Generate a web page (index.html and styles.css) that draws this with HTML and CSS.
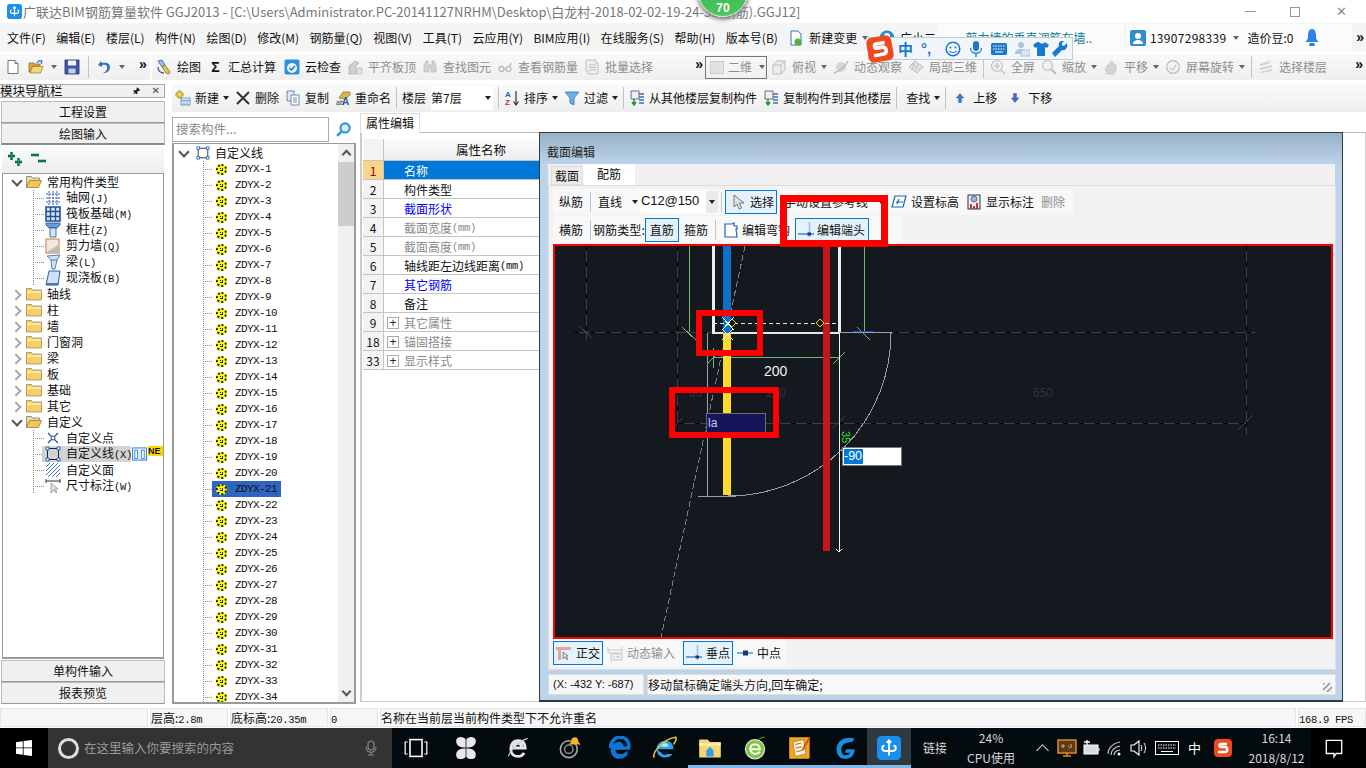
FILE: index.html
```html
<!DOCTYPE html>
<html lang="zh-CN">
<head>
<meta charset="utf-8">
<title>广联达BIM钢筋算量软件 GGJ2013</title>
<link rel="stylesheet" href="styles.css">
</head>
<body>
<svg class="sprite" xmlns="http://www.w3.org/2000/svg">
<symbol id="app" viewBox="0 0 16 16"><rect width="16" height="16" rx="3" fill="#1a90ee"/><path d="M8 3.500v9.500M5 6.500c-2 0-2 3 0 3.500h6c2-.5 2-3.500 0-3.500M6.500 4.500 8 3l1.500 1.500" fill="none" stroke="#fff" stroke-width="1.300"/></symbol>
<symbol id="doc" viewBox="0 0 16 16"><path d="M3 1.500h7l3 3v10H3z" fill="#fff" stroke="#777"/><path d="M10 1.500v3h3" fill="#dde" stroke="#777"/></symbol>
<symbol id="open" viewBox="0 0 16 16"><path d="M1 4h5l1 1h5v2H5L3 13H1z" fill="#d9a63a" stroke="#8a6a1e" stroke-width=".7"/><path d="M4.500 7.500H15L12.500 14H2z" fill="#f6d67c" stroke="#9a7420" stroke-width=".7"/><path d="M9 4c1-2 3-3 5-2l-1 3" fill="none" stroke="#2a6fc4" stroke-width="1.200"/></symbol>
<symbol id="save" viewBox="0 0 16 16"><path d="M1 1h14v14H1z" fill="#3e57a8" stroke="#1d2d70" stroke-width=".8"/><path d="M4 1.500h8v5H4z" fill="#f3f3f3"/><path d="M4.500 9.500h7v5h-7z" fill="#c6cede"/></symbol>
<symbol id="undo" viewBox="0 0 16 16"><path d="M5 2 2 6l4 2V6c4-1 6 1 5 4-.5 2-2 3-4 4 4 0 7-2 7-6 0-4-4-5-8-4z" fill="#2b72c8"/></symbol>
<symbol id="draw" viewBox="0 0 16 16"><path d="M2 2l4-1 3 5-3 2z" fill="#9ac0ea" stroke="#2a5ea8" stroke-width=".8"/><path d="M6 8l3-2 5 7-1 2-3-1z" fill="#e8c15a" stroke="#8a6a1e" stroke-width=".8"/><path d="M2 8c0 4 3 6 6 6" fill="none" stroke="#2a5ea8" stroke-width="1.400"/></symbol>
<symbol id="cloud" viewBox="0 0 16 16"><rect x=".5" y=".5" width="15" height="15" rx="2" fill="#2d8fdf"/><circle cx="8" cy="9" r="5" fill="#eaf4fd"/><path d="M5.500 9l2 2 3.500-4" fill="none" stroke="#2371bd" stroke-width="1.500"/></symbol>
<symbol id="gplate" viewBox="0 0 16 16"><path d="M2 15V7l6-5 4 2-3 3v8z" fill="#cfcfcf" stroke="#aaa" stroke-width=".7"/><path d="M10 9h5v6h-5z" fill="#e3e3e3" stroke="#b5b5b5" stroke-width=".7"/></symbol>
<symbol id="binoc" viewBox="0 0 16 16"><path d="M2 7l2-5h2v4h4V2h2l2 5v6H9V8H7v5H2z" fill="#d3d3d3" stroke="#b0b0b0" stroke-width=".6"/></symbol>
<symbol id="glass" viewBox="0 0 16 16"><circle cx="4.500" cy="10" r="2.500" fill="none" stroke="#bbb" stroke-width="1.300"/><path d="M9 10a2.500 2.500 0 1 0 5 0 2.500 2.500 0 1 0-5 0M7 10h2M13 8l1-4" fill="none" stroke="#bbb" stroke-width="1.300"/></symbol>
<symbol id="batch" viewBox="0 0 16 16"><path d="M2 1h10v3h2v11H4v-3H2z" fill="#eee" stroke="#c0c0c0"/><path d="M5 6h7M5 8.500h7M5 11h7" stroke="#c0c0c0"/></symbol>
<symbol id="cube" viewBox="0 0 16 16"><path d="M2 6l4-4h8v9l-4 4H2z" fill="#eee" stroke="#bdbdbd"/><path d="M2 6h8v9M10 6l4-4" fill="none" stroke="#bdbdbd"/></symbol>
<symbol id="orbit" viewBox="0 0 16 16"><circle cx="8" cy="8" r="5" fill="#d6d6d6"/><path d="M1 14C5 13 13 7 15 2" fill="none" stroke="#bbb" stroke-width="1.500"/></symbol>
<symbol id="local" viewBox="0 0 16 16"><path d="M1 8l6-6 8 6-6 6z" fill="#e5e5e5" stroke="#bbb"/><path d="M4 5l8 6M7 2.500l-3 9M10 5l-3 8" stroke="#c5c5c5"/></symbol>
<symbol id="zfull" viewBox="0 0 16 16"><circle cx="7" cy="7" r="5.500" fill="#f0f0f0" stroke="#c0c0c0" stroke-width="1.200"/><path d="M4 7h6M7 4v6M11 11l4 4" stroke="#bbb" stroke-width="1.200"/></symbol>
<symbol id="zoom" viewBox="0 0 16 16"><circle cx="6.500" cy="6.500" r="5" fill="#f2f2f2" stroke="#ccc" stroke-width="1.400"/><path d="M10 10l5 5" stroke="#bbb" stroke-width="2"/></symbol>
<symbol id="pan" viewBox="0 0 16 16"><path d="M4 15l-2-5 2-1V6l2 1V4l2 1V2l2 1 1 2 2 1v5l-2 4z" fill="#d5d5d5" stroke="#bdbdbd" stroke-width=".6"/></symbol>
<symbol id="rot" viewBox="0 0 16 16"><circle cx="8" cy="8" r="6.300" fill="#f3f3f3" stroke="#bbb" stroke-width="1.200"/><path d="M5 9l3 2 3-5" fill="none" stroke="#c5c5c5" stroke-width="1.200"/></symbol>
<symbol id="layers" viewBox="0 0 16 16"><path d="M2 5l10-3v2L2 7zM2 9l12-3v2L2 11zM2 13l12-3v2l-12 2z" fill="#d2d2d2"/></symbol>
<symbol id="newc" viewBox="0 0 16 16"><path d="M1 3h2V1h3v2h2v3H6v2H3V6H1z" fill="#f0d64a" stroke="#9a8a1e" stroke-width=".8"/><rect x="6" y="8" width="9" height="7" fill="#dfe9f5" stroke="#5c86b8" stroke-width=".8"/><path d="M6 10.500h9M9 11v4M12 11v4" stroke="#5c86b8" stroke-width=".7"/></symbol>
<symbol id="del" viewBox="0 0 16 16"><path d="M2 2l12 12M14 2 2 14" stroke="#333" stroke-width="2"/></symbol>
<symbol id="copy" viewBox="0 0 16 16"><path d="M2 1h7v10H2z" fill="#e3ecf8" stroke="#4c6da3" stroke-width=".8"/><path d="M6 5h8v10H6z" fill="#fff" stroke="#4c6da3" stroke-width=".8"/><path d="M8 8h4M8 10h4M8 12h4" stroke="#4c6da3" stroke-width=".8"/></symbol>
<symbol id="filter" viewBox="0 0 16 16"><path d="M1 2h14l-5 6v7l-4-2V8z" fill="#6db0e6" stroke="#2c74b4" stroke-width=".8"/></symbol>
<symbol id="cpf" viewBox="0 0 16 16"><path d="M2 1h8v8H2z" fill="#eef" stroke="#333" stroke-width=".7"/><path d="M5 9v6M3 12l2 3 2-3" stroke="#1b9a2a" stroke-width="1.500" fill="none"/><path d="M10 4h5M10 7h5M10 10h5M10 13h5" stroke="#3a6fb0" stroke-width="1.400"/></symbol>
<symbol id="up" viewBox="0 0 16 16"><path d="M8 2l5 6h-3v6H6V8H3z" fill="#2d7fd3" stroke="#1a4f90" stroke-width=".5"/></symbol>
<symbol id="down" viewBox="0 0 16 16"><path d="M8 14l5-6h-3V2H6v6H3z" fill="#4a66c0" stroke="#2a3f90" stroke-width=".5"/></symbol>
<symbol id="search" viewBox="0 0 16 16"><circle cx="9.500" cy="6.500" r="4.300" fill="#dbeeff" stroke="#2f97d8" stroke-width="2"/><path d="M6.500 9.500 2 14" stroke="#2f97d8" stroke-width="2.500"/></symbol>
<symbol id="folder" viewBox="0 0 16 14"><path d="M.5 3V1.500h5l1 1.500h9v10H.500z" fill="#f4cf6a" stroke="#a78b46" stroke-width=".8"/><path d="M1 4h14v2H1z" fill="#fbeab0"/></symbol>
<symbol id="fopen" viewBox="0 0 16 14"><path d="M.5 12V1.500h5l1 1.500h7v2" fill="#e9d9ae" stroke="#8d7a4c" stroke-width=".8"/><path d="M.5 12.500 3.500 5.500h12l-3 7z" fill="#f5c650" stroke="#8d7a4c" stroke-width=".8"/></symbol>
<symbol id="grid" viewBox="0 0 16 16"><path d="M1 4h14M1 8h14M1 12h14M4 1v14M8 1v14M12 1v14" stroke="#2d5ea8" stroke-width="1" stroke-dasharray="2 1"/></symbol>
<symbol id="raft" viewBox="0 0 16 16"><path d="M1 1h14v14H1z" fill="#d9e6f5" stroke="#1f4f9a" stroke-width="1.600"/><path d="M1 5.500h14M1 10.500h14M5.500 1v14M10.500 1v14" stroke="#1f4f9a" stroke-width="1.400"/></symbol>
<symbol id="colm" viewBox="0 0 16 16"><path d="M1 1h14v2l-3 3H4L1 3z" fill="#6e9bd4" stroke="#1f4f9a" stroke-width=".8"/><path d="M5 6h6v9H5z" fill="#d5e4f6" stroke="#1f4f9a" stroke-width=".8"/></symbol>
<symbol id="wall" viewBox="0 0 16 16"><rect x="1" y="1" width="13" height="14" fill="#f5e8da" stroke="#c97a45" stroke-width="1"/><path d="M2 14 13 7v7z" fill="#bbb"/></symbol>
<symbol id="beam" viewBox="0 0 16 16"><path d="M2 2l13-1-3 5-2 9H7L6 6z" fill="#cfe2f6" stroke="#2a66ac" stroke-width=".8"/><path d="M6 6l6 0" stroke="#2a66ac" stroke-width=".8"/></symbol>
<symbol id="slab" viewBox="0 0 16 16"><path d="M4 1h11l-2 14H1z" fill="#cfe0f5" stroke="#2a5ea8"/><path d="M2 14h11" stroke="#2a5ea8" stroke-width="1.500"/></symbol>
<symbol id="pt" viewBox="0 0 16 16"><path d="M3 3l10 10M13 3 3 13" stroke="#1f4f9a" stroke-width="1.100"/><circle cx="8" cy="8" r="2" fill="#fff" stroke="#1f4f9a"/></symbol>
<symbol id="ln" viewBox="0 0 16 16"><rect x="2.500" y="2.500" width="11" height="11" fill="none" stroke="#222"/><path d="M1 1h3v3H1zM12 1h3v3h-3zM1 12h3v3H1zM12 12h3v3h-3z" fill="#fff" stroke="#1e62c8"/></symbol>
<symbol id="ar" viewBox="0 0 16 16"><path d="M1 5l4-4M1 9l8-8M1 13 13 1M3 15 15 3M7 15l8-8M11 15l4-4" stroke="#3d78c8" stroke-width="1"/></symbol>
<symbol id="dim" viewBox="0 0 16 16"><path d="M1 1v4M15 1v4M1 3h14" stroke="#333"/><path d="M6 5v10l3-3 2 3 1-1-2-3h3z" fill="#ddd" stroke="#888" stroke-width=".7"/></symbol>
<symbol id="cols" viewBox="0 0 16 16"><rect x=".5" y="1.500" width="15" height="13" fill="#e5f1fb" stroke="#2d7fd3"/><path d="M3 4h3v9H3zM10 4h3v9h-3z" fill="#fff" stroke="#2d7fd3"/></symbol>
<symbol id="arrow" viewBox="0 0 16 16"><path d="M3 1v12l3-3 2 5 2.500-1-2-5H13z" fill="#e3e3e3" stroke="#777"/></symbol>
<symbol id="lvl" viewBox="0 0 16 16"><path d="M4 2h11l-3 11H1z" fill="#fff" stroke="#1f62b8" stroke-width="1.200"/><path d="M8 5 6 10M5 8h7" stroke="#1f62b8" stroke-width="1.200"/></symbol>
<symbol id="lbl" viewBox="0 0 16 16"><rect x="2" y="1" width="12" height="14" fill="#e8eef6" stroke="#333"/><circle cx="8" cy="5" r="3" fill="#9db6d6" stroke="#333" stroke-width=".6"/><path d="M4 15v-5h2v5zM7 15v-3h2v3zM10 15V9h2v6z" fill="#c33"/></symbol>
<symbol id="hook" viewBox="0 0 16 16"><path d="M2 15V2h7l2-1v3h3v3h-1l1 8z" fill="#fff" stroke="#1f62b8" stroke-width="1.200"/></symbol>
<symbol id="endp" viewBox="0 0 16 16"><path d="M11.500 0v15" stroke="#9dc0e8" stroke-width="1.600"/><path d="M0 12h16" stroke="#2a66b4" stroke-width="1.200"/><rect x="9.500" y="10.500" width="3.500" height="3" fill="#14387a"/></symbol>
<symbol id="mid" viewBox="0 0 16 16"><path d="M0 8h16" stroke="#6b95cf" stroke-width="1.600"/><rect x="6" y="5.500" width="5" height="5" fill="#14387a"/></symbol>
<symbol id="ortho" viewBox="0 0 16 16"><path d="M0 2h15v3H5v10H2V5H0z" fill="#e3a6a6"/><path d="M7 7v7l2-2 2 3 1-1-2-3h2z" fill="#ddd" stroke="#666" stroke-width=".7"/></symbol>
<symbol id="dyn" viewBox="0 0 16 16"><path d="M1 2v6h14V2M1 5h14" fill="none" stroke="#c5c5c5"/><rect x="4" y="9" width="11" height="6" fill="#f5f5f5" stroke="#c5c5c5"/><path d="M7 11v2M10 11v2M12 11v2" stroke="#b5b5b5"/></symbol>
<symbol id="win" viewBox="0 0 16 16"><path d="M0 2.200 6.800 1.200V7.500H0zM7.600 1.100 16 0V7.500H7.600zM0 8.300H6.800V14.800L0 13.800zM7.600 8.300H16V16L7.600 14.900z" fill="#fff"/></symbol>
<symbol id="mic" viewBox="0 0 16 16"><rect x="5" y="1" width="6" height="9" rx="3" fill="none" stroke="#888" stroke-width="1.200"/><path d="M3 7c0 7 10 7 10 0M8 12v3M5 15h6" fill="none" stroke="#888" stroke-width="1.200"/></symbol>
<symbol id="tview" viewBox="0 0 20 16"><rect x="5" y="1" width="10" height="14" fill="none" stroke="#fff" stroke-width="1.300"/><path d="M3 3H1v10h2M17 3h2v10h-2" fill="none" stroke="#fff" stroke-width="1"/></symbol>
<symbol id="wheel" viewBox="0 0 20 20"><path d="M10 10C4 10 1 7 2 3c1-3 6-3 8 0 2-3 7-3 8 0 1 4-2 7-8 7 6 0 9 3 8 7-1 3-6 3-8 0-2 3-7 3-8 0-1-4 2-7 8-7z" fill="#e8e8e8"/><path d="M10 0v20M0 10h20" stroke="#000" stroke-width=".6"/></symbol>
<symbol id="ie" viewBox="0 0 20 20"><path d="M4 10h12c0-4-2-6-6-6s-6 3-6 7 3 6 6 6c2 0 4-1 5-3M7 9c0-2 1-3 3-3s3 1 3 3" fill="none" stroke="#e6e6e6" stroke-width="2.400"/><path d="M2 17C3 13 9 5 18 2" fill="none" stroke="#cfcfcf" stroke-width="1"/></symbol>
<symbol id="swirl" viewBox="0 0 20 20"><circle cx="9" cy="11" r="7" fill="none" stroke="#aaa" stroke-width="1.300"/><circle cx="9" cy="11" r="3.500" fill="none" stroke="#888" stroke-width="1.300"/><path d="M14 1c3 0 3 3 3 4l2 2h-10l2-2c0-1 0-4 3-4z" fill="#f5b81f"/></symbol>
<symbol id="edge" viewBox="0 0 20 20"><path d="M3 11h11c0-4-1-6-4-6S4 7 3 11zM3 11c0 5 3 8 7 8 3 0 5-1 7-3v-4c-2 2-4 3-6 3-3 0-4-2-4-4" fill="#0a76d8"/><path d="M3 10C3 4 7 1 11 1c5 0 8 4 7 9H8c0-3 1-4 3-4" fill="none" stroke="#0a76d8" stroke-width="3"/></symbol>
<symbol id="ieb" viewBox="0 0 20 20"><path d="M3 11h14c0-5-3-7-7-7s-7 3-7 7 3 7 7 7c3 0 5-1 6-3H12c-1 1-4 1-5-1" fill="#2aa3e8"/><path d="M7 9c0-2 1-3 3-3s3 1 3 3z" fill="#bce3fa"/><path d="M1 18C-1 14 9 2 19 1c1 2-1 5-2 6" fill="none" stroke="#eec33a" stroke-width="1.300"/></symbol>
<symbol id="fold" viewBox="0 0 20 20"><path d="M1 3h7l2 2h9v13H1z" fill="#f7d774"/><path d="M7 12l3-3 3 3v5H7z" fill="#3d9ade"/><path d="M1 7h18" stroke="#fdeeb6" stroke-width="2"/></symbol>
<symbol id="gre" viewBox="0 0 20 20"><circle cx="10" cy="11" r="8" fill="#7fc63a" stroke="#e0e0e0" stroke-width="1"/><path d="M6 11h8c0-3-1-4-4-4s-4 2-4 4 2 4 4 4c1.500 0 3-.5 4-2" fill="none" stroke="#fff" stroke-width="1.600"/><path d="M13 3c2-2 4-2 5-2" stroke="#3a8a1a" fill="none"/></symbol>
<symbol id="note" viewBox="0 0 20 20"><rect x="1" y="1" width="17" height="18" rx="1" fill="#f5a51d"/><path d="M4 5l9-2 2 12-9 2z" fill="#fdf3d5" stroke="#a9691c" stroke-width=".6"/><path d="M6 7l5-1M6.500 10l5-1M7 13l5-1" stroke="#a9691c" stroke-width=".8"/><path d="M12 12 18 1" stroke="#d8461c" stroke-width="1.600"/></symbol>
<symbol id="gg" viewBox="0 0 20 20"><path d="M18 2C10 0 3 4 3 11c0 5 3 8 7 8 5 0 8-3 8-8h-7l-1 3h4c-1 2-2 2-4 2-2 0-3-2-3-5 0-4 4-6 9-6z" fill="#1a8de0"/></symbol>
<symbol id="mon" viewBox="0 0 20 20"><rect x="1" y="2" width="18" height="13" fill="#5a3a1a" stroke="#e08a2a" stroke-width="1.500"/><path d="M4 8h4M6 6v4M11 8h1M14 6v4M12 10h1" stroke="#f0b050"/><path d="M6 18h8M10 15v3" stroke="#e08a2a" stroke-width="1.500"/></symbol>
<symbol id="bat" viewBox="0 0 20 20"><rect x="3" y="7" width="14" height="9" fill="#ddd" stroke="#fff"/><path d="M6 2v5M3 4h6" stroke="#fff" stroke-width="1.300"/><path d="M18 10v3" stroke="#fff"/></symbol>
<symbol id="wifi" viewBox="0 0 20 20"><path d="M3 16C3 10 8 5 15 4M6 17c0-4 3-8 9-9M9 17c0-2 2-5 6-5" fill="none" stroke="#ccc" stroke-width="1.100"/><circle cx="14" cy="16" r="1.500" fill="#fff"/></symbol>
<symbol id="spk" viewBox="0 0 20 20"><path d="M2 7h3l5-4v14l-5-4H2z" fill="none" stroke="#fff" stroke-width="1.100"/><path d="M12 7c1 2 1 4 0 6M15 5c2 3 2 7 0 10" fill="none" stroke="#fff"/></symbol>
<symbol id="kbd" viewBox="0 0 24 20"><rect x=".5" y="3.500" width="23" height="13" fill="none" stroke="#fff"/><path d="M3 7h18M3 10h18" stroke="#fff" stroke-dasharray="1.500 1"/><path d="M6 13.500h12" stroke="#fff"/></symbol>
<symbol id="sg" viewBox="0 0 20 20"><rect x="1" y="1" width="18" height="18" rx="4" fill="#ef4a1f"/><path d="M14 6H8c-2 0-2 3 0 3h4c3 0 3 5 0 5H5" fill="none" stroke="#fff" stroke-width="2.600"/></symbol>
<symbol id="msg" viewBox="0 0 20 20"><path d="M3 3h14v12h-5l-2 3v-3H3z" fill="none" stroke="#fff" stroke-width="1.200"/></symbol>
<symbol id="bell" viewBox="0 0 16 20"><path d="M8 1c3 0 4 3 4 7 0 3 1 5 3 6H1c2-1 3-3 3-6 0-4 1-7 4-7z" fill="#2f82e0"/><rect x="5" y="15" width="6" height="3" rx="1.500" fill="#2f82e0"/></symbol>
<symbol id="user" viewBox="0 0 16 16"><rect width="16" height="16" rx="2" fill="#2d8fd0"/><circle cx="8" cy="6" r="3" fill="#fff"/><path d="M3 14c0-3 3-4 5-4s5 1 5 4z" fill="#fff"/></symbol>
<symbol id="bnew" viewBox="0 0 16 16"><path d="M3 1h7l3 3v11H3z" fill="#fff" stroke="#2a7ac8"/><circle cx="10" cy="12" r="3.500" fill="#5fae2a"/></symbol>
<symbol id="xiao" viewBox="0 0 16 16"><circle cx="8" cy="8" r="7.500" fill="#2788d8"/><circle cx="8" cy="6" r="3" fill="#fff"/></symbol>
<symbol id="smile" viewBox="0 0 16 16"><circle cx="8" cy="8" r="6.800" fill="none" stroke="#1878d0" stroke-width="1.500"/><circle cx="5.500" cy="6.500" r="1" fill="#1878d0"/><circle cx="10.500" cy="6.500" r="1" fill="#1878d0"/><path d="M4.500 10c1 2 6 2 7 0" fill="none" stroke="#1878d0" stroke-width="1.200"/></symbol>
<symbol id="bmic" viewBox="0 0 16 16"><rect x="5" y="0" width="6" height="10" rx="3" fill="#1878d0"/><path d="M2.500 7c0 7 11 7 11 0M8 12v4" fill="none" stroke="#1878d0" stroke-width="1.300"/></symbol>
<symbol id="bkbd" viewBox="0 0 16 16"><rect y="2" width="16" height="12" rx="1.500" fill="#1878d0"/><path d="M2 5h12M2 8h12" stroke="#fff" stroke-dasharray="1.500 1"/><path d="M4 11h8" stroke="#fff"/></symbol>
<symbol id="bper" viewBox="0 0 16 16"><circle cx="7" cy="4" r="3" fill="#a9c3dc"/><path d="M1 13c0-4 3-5 6-5s3 1 3 1v4z" fill="#a9c3dc"/><rect x="7" y="9" width="9" height="6" fill="#dbe6f0" stroke="#a9c3dc"/></symbol>
<symbol id="shirt" viewBox="0 0 16 16"><path d="M4 1 0 4l2 3 2-1v9h8V6l2 1 2-3-4-3c-1 2-5 2-6 0z" fill="#1878d0"/></symbol>
<symbol id="wrench" viewBox="0 0 16 16"><path d="M15 2l-3 3-2-1V2l2-2c-3-1-6 1-5 5L0 12l3 4 7-7c4 1 6-3 5-7z" fill="#1878d0"/></symbol>
<symbol id="plus2" viewBox="0 0 17 16"><path d="M4.500 1v8M1 5h7M11.500 7v8M8 11h7" stroke="#063" stroke-width="2.400"/><path d="M4.500 2v6M2 5h5M11.500 8v6M9 11h5" stroke="#0a9a8a" stroke-width=".8"/></symbol>
<symbol id="minus2" viewBox="0 0 17 16"><path d="M1 4h8M8 10h8" stroke="#063" stroke-width="2.400"/><path d="M2 4h6M9 10h6" stroke="#0a9a8a" stroke-width=".8"/></symbol>
</svg>

<div class="badge"><span>70</span></div>
<div class="ime">
  <svg class="ime-s"><use href="#sg"/></svg>
  <b class="ime-zh">中</b><span class="ime-p">°,</span>
  <svg class="ic"><use href="#smile"/></svg><svg class="ic"><use href="#bmic"/></svg><svg class="ic"><use href="#bkbd"/></svg><svg class="ic"><use href="#bper"/></svg><svg class="ic tight"><use href="#shirt"/></svg><svg class="ic tight"><use href="#wrench"/></svg>
</div>

<header class="title">
  <svg class="ic app"><use href="#app"/></svg>
  <span class="title-text">广联达BIM钢筋算量软件 GGJ2013 - [C:\Users\Administrator.PC-20141127NRHM\Desktop\白龙村-2018-02-02-19-24-35(钢筋).GGJ12]</span>
  <span class="winbtns"><i class="w-min"></i><i class="w-max"></i><i class="w-close">✕</i></span>
</header>

<nav class="menu">
  <span>文件(F)</span><span>编辑(E)</span><span>楼层(L)</span><span>构件(N)</span><span>绘图(D)</span><span>修改(M)</span><span>钢筋量(Q)</span><span>视图(V)</span><span>工具(T)</span><span>云应用(Y)</span><span>BIM应用(I)</span><span>在线服务(S)</span><span>帮助(H)</span><span>版本号(B)</span>
  <span class="it"><svg class="ic"><use href="#bnew"/></svg>新建变更<i class="tri"></i></span>
  <span class="it"><svg class="ic"><use href="#xiao"/></svg>广小二</span>
  <span class="notice">剪力墙的垂直调筋在墙..</span>
  <span class="acct"><svg class="ic"><use href="#user"/></svg><span class="phone">13907298339</span><i class="tri"></i><em>造价豆:0</em><svg class="ic bell"><use href="#bell"/></svg></span>
  <b class="more">»</b>
</nav>

<div class="tb1">
  <div class="tb1-a">
    <svg class="ic"><use href="#doc"/></svg><svg class="ic"><use href="#open"/></svg><i class="tri"></i><svg class="ic"><use href="#save"/></svg><i class="sep"></i><svg class="ic"><use href="#undo"/></svg><i class="tri"></i><b class="more small">»</b>
  </div>
  <div class="tb1-b">
    <span class="it"><svg class="ic"><use href="#draw"/></svg>绘图</span>
    <span class="it"><b class="sigma">Σ</b>汇总计算</span>
    <span class="it"><svg class="ic"><use href="#cloud"/></svg>云检查</span>
    <span class="it off"><svg class="ic"><use href="#gplate"/></svg>平齐板顶</span>
    <span class="it off"><svg class="ic"><use href="#binoc"/></svg>查找图元</span>
    <span class="it off"><svg class="ic"><use href="#glass"/></svg>查看钢筋量</span>
    <span class="it off"><svg class="ic"><use href="#batch"/></svg>批量选择</span>
    <b class="more small push">»</b>
  </div>
  <div class="tb1-c off">
    <span class="view2d"><i class="sq"></i>二维<i class="tri"></i></span>
    <span class="it"><svg class="ic"><use href="#cube"/></svg>俯视<i class="tri"></i></span>
    <span class="it"><svg class="ic"><use href="#orbit"/></svg>动态观察</span>
    <span class="it"><svg class="ic"><use href="#local"/></svg>局部三维</span>
    <i class="sep"></i>
    <span class="it"><svg class="ic"><use href="#zfull"/></svg>全屏</span>
    <span class="it"><svg class="ic"><use href="#zoom"/></svg>缩放<i class="tri"></i></span>
    <span class="it"><svg class="ic"><use href="#pan"/></svg>平移<i class="tri"></i></span>
    <span class="it"><svg class="ic"><use href="#rot"/></svg>屏幕旋转<i class="tri"></i></span>
    <i class="sep"></i>
    <span class="it"><svg class="ic"><use href="#layers"/></svg>选择楼层</span>
    <b class="more small push dark">»</b>
  </div>
</div>

<main class="main">
  <aside class="nav">
    <div class="nav-head"><span>模块导航栏</span><span class="nav-btn">🖈</span><span class="nav-x">✕</span></div>
    <div class="navbtn">工程设置</div>
    <div class="navbtn cur">绘图输入</div>
    <div class="nav-tools"><svg class="pm"><use href="#plus2"/></svg><svg class="pm"><use href="#minus2"/></svg></div>
    <div class="navtree">
      <div class="nr"><i class="chev open"></i><svg class="fi"><use href="#fopen"/></svg>常用构件类型</div>
      <div class="nr kid vl"><svg class="ic"><use href="#grid"/></svg><span>轴网<u>(J)</u></span></div>
      <div class="nr kid vl"><svg class="ic"><use href="#raft"/></svg><span>筏板基础<u>(M)</u></span></div>
      <div class="nr kid vl"><svg class="ic"><use href="#colm"/></svg><span>框柱<u>(Z)</u></span></div>
      <div class="nr kid vl"><svg class="ic"><use href="#wall"/></svg><span>剪力墙<u>(Q)</u></span></div>
      <div class="nr kid vl"><svg class="ic"><use href="#beam"/></svg><span>梁<u>(L)</u></span></div>
      <div class="nr kid vl"><svg class="ic"><use href="#slab"/></svg><span>现浇板<u>(B)</u></span></div>
      <div class="nr"><i class="chev"></i><svg class="fi"><use href="#folder"/></svg>轴线</div>
      <div class="nr"><i class="chev"></i><svg class="fi"><use href="#folder"/></svg>柱</div>
      <div class="nr"><i class="chev"></i><svg class="fi"><use href="#folder"/></svg>墙</div>
      <div class="nr"><i class="chev"></i><svg class="fi"><use href="#folder"/></svg>门窗洞</div>
      <div class="nr"><i class="chev"></i><svg class="fi"><use href="#folder"/></svg>梁</div>
      <div class="nr"><i class="chev"></i><svg class="fi"><use href="#folder"/></svg>板</div>
      <div class="nr"><i class="chev"></i><svg class="fi"><use href="#folder"/></svg>基础</div>
      <div class="nr"><i class="chev"></i><svg class="fi"><use href="#folder"/></svg>其它</div>
      <div class="nr"><i class="chev open"></i><svg class="fi"><use href="#fopen"/></svg>自定义</div>
      <div class="nr kid vl"><svg class="ic"><use href="#pt"/></svg><span>自定义点</span></div>
      <div class="nr kid vl"><span class="selrow"><svg class="ic"><use href="#ln"/></svg><span>自定义线<u>(X)</u></span></span><svg class="ic"><use href="#cols"/></svg><span class="ne">NE</span></div>
      <div class="nr kid vl"><svg class="ic"><use href="#ar"/></svg><span>自定义面</span></div>
      <div class="nr kid vl"><svg class="ic"><use href="#dim"/></svg><span>尺寸标注<u>(W)</u></span></div>
    </div>
    <div class="navbtn">单构件输入</div>
    <div class="navbtn">报表预览</div>
  </aside>

  <section class="work">
    <div class="tb2">
      <span class="it"><svg class="ic"><use href="#newc"/></svg>新建<i class="tri dark"></i></span>
      <span class="it"><svg class="ic"><use href="#del"/></svg>删除</span>
      <span class="it"><svg class="ic"><use href="#copy"/></svg>复制</span>
      <span class="it"><svg class="ic" viewBox="0 0 16 16"><path class="ren" d="M4 8l4-6h7v3l-5 4z"/><text x="7" y="15" class="svgA">A</text><text x="1" y="15" class="svgB">ab</text></svg>重命名</span>
      <i class="sep"></i>
      <span>楼层</span>
      <span class="floor">第7层<i class="tri dark"></i></span>
      <i class="sep"></i>
      <span class="it"><svg class="ic" viewBox="0 0 16 16"><text x="1" y="7" class="svgAz">A</text><text x="1" y="15" class="svgZr">Z</text><path class="srt" d="M12 1v13M9.500 11.500 12 15l2.500-3.500"/></svg>排序<i class="tri dark"></i></span>
      <span class="it"><svg class="ic"><use href="#filter"/></svg>过滤<i class="tri dark"></i></span>
      <i class="sep"></i>
      <span class="it"><svg class="ic"><use href="#cpf"/></svg>从其他楼层复制构件</span>
      <span class="it"><svg class="ic"><use href="#cpf"/></svg>复制构件到其他楼层</span>
      <i class="sep"></i>
      <span class="it find">查找<i class="tri dark"></i></span>
      <i class="sep"></i>
      <span class="it mv"><svg class="ic"><use href="#up"/></svg>上移</span>
      <span class="it mv"><svg class="ic"><use href="#down"/></svg>下移</span>
    </div>
    <div class="panes">
      <div class="complist">
        <div class="searchrow"><span class="searchbox">搜索构件...</span><svg class="ic searchi"><use href="#search"/></svg></div>
        <div class="comptree">
          <div class="ctree">
            <div class="croot"><i class="chev open"></i><svg class="ic"><use href="#ln"/></svg><span>自定义线</span></div>
            <div class="cr"><span class="lb"><i class="gear"></i>ZDYX-1</span></div>
            <div class="cr"><span class="lb"><i class="gear"></i>ZDYX-2</span></div>
            <div class="cr"><span class="lb"><i class="gear"></i>ZDYX-3</span></div>
            <div class="cr"><span class="lb"><i class="gear"></i>ZDYX-4</span></div>
            <div class="cr"><span class="lb"><i class="gear"></i>ZDYX-5</span></div>
            <div class="cr"><span class="lb"><i class="gear"></i>ZDYX-6</span></div>
            <div class="cr"><span class="lb"><i class="gear"></i>ZDYX-7</span></div>
            <div class="cr"><span class="lb"><i class="gear"></i>ZDYX-8</span></div>
            <div class="cr"><span class="lb"><i class="gear"></i>ZDYX-9</span></div>
            <div class="cr"><span class="lb"><i class="gear"></i>ZDYX-10</span></div>
            <div class="cr"><span class="lb"><i class="gear"></i>ZDYX-11</span></div>
            <div class="cr"><span class="lb"><i class="gear"></i>ZDYX-12</span></div>
            <div class="cr"><span class="lb"><i class="gear"></i>ZDYX-13</span></div>
            <div class="cr"><span class="lb"><i class="gear"></i>ZDYX-14</span></div>
            <div class="cr"><span class="lb"><i class="gear"></i>ZDYX-15</span></div>
            <div class="cr"><span class="lb"><i class="gear"></i>ZDYX-16</span></div>
            <div class="cr"><span class="lb"><i class="gear"></i>ZDYX-17</span></div>
            <div class="cr"><span class="lb"><i class="gear"></i>ZDYX-18</span></div>
            <div class="cr"><span class="lb"><i class="gear"></i>ZDYX-19</span></div>
            <div class="cr"><span class="lb"><i class="gear"></i>ZDYX-20</span></div>
            <div class="cr"><span class="lb sel"><i class="gear"></i>ZDYX-21</span></div>
            <div class="cr"><span class="lb"><i class="gear"></i>ZDYX-22</span></div>
            <div class="cr"><span class="lb"><i class="gear"></i>ZDYX-23</span></div>
            <div class="cr"><span class="lb"><i class="gear"></i>ZDYX-24</span></div>
            <div class="cr"><span class="lb"><i class="gear"></i>ZDYX-25</span></div>
            <div class="cr"><span class="lb"><i class="gear"></i>ZDYX-26</span></div>
            <div class="cr"><span class="lb"><i class="gear"></i>ZDYX-27</span></div>
            <div class="cr"><span class="lb"><i class="gear"></i>ZDYX-28</span></div>
            <div class="cr"><span class="lb"><i class="gear"></i>ZDYX-29</span></div>
            <div class="cr"><span class="lb"><i class="gear"></i>ZDYX-30</span></div>
            <div class="cr"><span class="lb"><i class="gear"></i>ZDYX-31</span></div>
            <div class="cr"><span class="lb"><i class="gear"></i>ZDYX-32</span></div>
            <div class="cr"><span class="lb"><i class="gear"></i>ZDYX-33</span></div>
            <div class="cr"><span class="lb"><i class="gear"></i>ZDYX-34</span></div>
          </div>
          <div class="scroll"><i class="sc-up"></i><i class="sc-thumb"></i><i class="sc-down"></i></div>
        </div>
      </div>
      <div class="props">
        <div class="tabs"><span class="tab">属性编辑</span></div>
        <div class="sheet">
          <div class="prow head"><span class="n"></span><span class="v">属性名称</span></div>
          <div class="prow cur"><span class="n">1</span><span class="v">名称</span></div>
          <div class="prow"><span class="n">2</span><span class="v">构件类型</span></div>
          <div class="prow blue"><span class="n">3</span><span class="v">截面形状</span></div>
          <div class="prow gray"><span class="n">4</span><span class="v">截面宽度<u>(mm)</u></span></div>
          <div class="prow gray"><span class="n">5</span><span class="v">截面高度<u>(mm)</u></span></div>
          <div class="prow"><span class="n">6</span><span class="v">轴线距左边线距离<u>(mm)</u></span></div>
          <div class="prow blue"><span class="n">7</span><span class="v">其它钢筋</span></div>
          <div class="prow"><span class="n">8</span><span class="v">备注</span></div>
          <div class="prow gray"><span class="n">9</span><span class="v"><i class="plus">+</i>其它属性</span></div>
          <div class="prow gray"><span class="n">18</span><span class="v"><i class="plus">+</i>锚固搭接</span></div>
          <div class="prow gray"><span class="n">33</span><span class="v"><i class="plus">+</i>显示样式</span></div>
        </div>
      </div>
    </div>
  </section>

  <section class="dialog">
    <div class="dlg-title">截面编辑</div>
    <div class="dlg-tabs"><span class="dt">截面</span><span class="dt on">配筋</span></div>
    <div class="dlg-panel">
      <div class="dbar r1">
        <span>纵筋</span><i class="sep"></i><span>直线</span><i class="tri dark"></i>
        <span class="combo"><span class="combo-v">C12@150</span><span class="combo-b"><i class="tri dark"></i></span></span><i class="sep"></i>
        <span class="tbtn sel"><svg class="ic"><use href="#arrow"/></svg>选择</span>
        <span class="ref">手动设置参考线</span><i class="tri dark"></i>
        <span class="it"><svg class="ic"><use href="#lvl"/></svg>设置标高</span>
        <span class="it"><svg class="ic"><use href="#lbl"/></svg>显示标注</span>
        <span class="off">删除</span>
      </div>
      <div class="dbar r2">
        <span>横筋</span><i class="sep"></i><span class="rtype">钢筋类型:</span>
        <span class="tbtn sel">直筋</span><span class="plainb">箍筋</span><i class="sep"></i>
        <span class="it"><svg class="ic"><use href="#hook"/></svg>编辑弯钩</span>
        <span class="tbtn sel endb"><svg class="ic"><use href="#endp"/></svg>编辑端头</span>
      </div>
      <div class="canvas">
        <svg class="cad" viewBox="554 246 776 391" xmlns="http://www.w3.org/2000/svg">
          <g class="dg"><path d="M573 332H1254M678 423H1245M1245 246V435M676 246V425M585 246V340"/></g>
          <g class="dk"><path d="M573 332H1254M678 423H1245M1245 246V435M676 246V425M585 246V340"/></g>
          <path class="tk" d="M578 326l13 12M1237 430l15-15M672 428l10-10M832 428l12-12"/>
          <path class="diag" d="M744 246 660 637"/>
          <text class="dim" x="1032" y="397">650</text><text class="dim" x="765" y="397">200</text><text class="dim" x="688" y="397">60</text>
          <path class="gl" d="M688 246V332M863 246V332M712 357H838M712 348V368M681 327l14 13M856 327l13 13M706 364l12-12M832 364l12-12"/>
          <path class="bl" d="M852 332h20"/>
          <path class="wt3" d="M712.500 246V333M838 246V333"/>
          <path class="wt2" d="M711 332.500H838"/>
          <path class="gy" d="M838 332.500H890V334M890 333A163 163 0 0 1 727 496M706 333V496M697 496.500H735"/>
          <rect class="bb" x="722" y="246" width="8" height="87"/>
          <rect class="yb" x="722" y="333" width="8" height="162"/>
          <rect class="rb" x="822" y="246" width="7" height="305"/>
          <path class="wd" d="M712 323H838"/>
          <path class="dm" d="M731 319l4 4-4 4-4-4zM819 319l4 4-4 4-4-4z"/>
          <path class="wx" d="M721 317l12 13M733 317l-12 13M721 329l11 11M732 329l-11 11"/>
          <path class="cline" d="M838 333V551M835 549l3 3 3-3"/>
          <text class="t200" x="763" y="376">200</text>
          <text class="t35" transform="translate(841 431) rotate(90)">35</text>
          <path class="g3" d="M841 447v6"/>
          <rect class="labbox" x="705.500" y="413.500" width="59" height="20"/>
          <text class="labt" x="707" y="427">la</text>
        </svg>
        <div class="angle"><span>-90</span></div>
      </div>
      <div class="dbar r3">
        <span class="tbtn sel"><svg class="ic"><use href="#ortho"/></svg>正交</span>
        <span class="tbtn off dynb"><svg class="ic"><use href="#dyn"/></svg>动态输入</span>
        <span class="tbtn sel"><svg class="ic"><use href="#endp"/></svg>垂点</span>
        <span class="tbtn midb"><svg class="ic"><use href="#mid"/></svg>中点</span>
      </div>
    </div>
    <div class="dlg-status"><span class="coord">(X: -432 Y: -687)</span><span class="hint">移动鼠标确定端头方向,回车确定;</span></div>
    <i class="redbox rb1"></i><i class="redbox rb2"></i><i class="redbox rb3"></i>
  </section>
</main>

<footer class="status">
  <span class="s0"></span><span class="s1">层高:<u>2.8m</u></span><span class="s2">底标高:<u>20.35m</u></span><span class="s3"><u>0</u></span><span class="s4">名称在当前层当前构件类型下不允许重名</span><span class="s5"><u>168.9 FPS</u></span>
</footer>

<div class="taskbar">
  <span class="start"><svg class="ic"><use href="#win"/></svg></span>
  <span class="tsearch"><i class="ring"></i><span class="tsearch-t">在这里输入你要搜索的内容</span><svg class="ic"><use href="#mic"/></svg></span>
  <span class="task w48"><svg class="ti"><use href="#tview"/></svg></span>
  <span class="task w52"><svg class="ti"><use href="#wheel"/></svg></span>
  <span class="task w52"><svg class="ti"><use href="#ie"/></svg></span>
  <span class="task w52"><svg class="ti"><use href="#swirl"/></svg></span>
  <span class="task w46"><svg class="ti"><use href="#edge"/></svg></span>
  <span class="task w46"><svg class="ti"><use href="#ieb"/></svg></span>
  <span class="task w44 run"><svg class="ti"><use href="#fold"/></svg></span>
  <span class="task w45 run"><svg class="ti"><use href="#gre"/></svg></span>
  <span class="task w45 run"><svg class="ti"><use href="#note"/></svg></span>
  <span class="task w45 run"><svg class="ti"><use href="#gg"/></svg></span>
  <span class="task w44 run act"><svg class="ti"><use href="#app"/></svg></span>
  <span class="tlink">链接</span>
  <span class="tcpu"><span>24%</span><span>CPU使用</span></span>
  <span class="tray">
    <i class="caret"></i>
    <svg class="tr"><use href="#mon"/></svg><svg class="tr"><use href="#bat"/></svg><svg class="tr"><use href="#wifi"/></svg><svg class="tr"><use href="#spk"/></svg><svg class="tr k"><use href="#kbd"/></svg><span class="tzh">中</span><svg class="tr"><use href="#sg"/></svg>
  </span>
  <span class="clock"><span>16:14</span><span>2018/8/12</span></span>
  <span class="notif"><svg class="tr big"><use href="#msg"/></svg></span>
</div>
</body>
</html>
```
FILE: styles.css
```css
* { box-sizing: border-box; }
html, body { margin: 0; height: 100%; }
body {
  width: 1366px; height: 768px; overflow: hidden; position: relative;
  display: flex; flex-direction: column; background: #f3f3f3; color: #111;
  font: 12px/16px "Noto Sans CJK SC", "Liberation Sans", sans-serif;
}
i, em, u { font-style: normal; text-decoration: none; }
u { font-family: "Liberation Mono", monospace; font-size: 10.500px; letter-spacing: -.3px; }
.sprite { position: absolute; width: 0; height: 0; }
.svgA { font: bold 10px "Liberation Sans", sans-serif; fill: #2a5ea8; }
.svgB { font: 7px "Liberation Sans", sans-serif; fill: #333; }
.svgAz { font: bold 8px "Liberation Sans", sans-serif; fill: #2a5ea8; }
.svgZr { font: bold 8px "Liberation Sans", sans-serif; fill: #b33; }
.ren { fill: #d8b64e; stroke: #8a7020; stroke-width: .7; }
.srt { fill: none; stroke: #333; stroke-width: 1.200; }
.ic { width: 16px; height: 16px; flex: none; display: block; }
.it { display: inline-flex; align-items: center; gap: 5px; white-space: nowrap; }
.off { color: #8e8e8e; }
.sep { width: 1px; height: 22px; background: #c4c4c4; flex: none; }
.tri { width: 0; height: 0; flex: none; border: 3.500px solid transparent; border-top: 4px solid #666; border-bottom: 0; }
.tri.dark { border-top-color: #222; }
.more { font: bold 14px/14px "Liberation Sans", sans-serif; color: #111; }
.more.small { margin-bottom: 6px; }
.more.dark { color: #111; }
.push { margin-left: auto; }
.sigma { width: 13px; margin-right: 1px; font: bold 14px/16px "Liberation Sans", sans-serif; color: #111; text-align: center; }

/* overlays */
.badge {
  position: absolute; left: 698px; top: -33px; width: 50px; height: 50px; border-radius: 50%; z-index: 6;
  background: linear-gradient(#2fae4e, #4dc85e); box-shadow: 0 2px 4px 1px #888; border: 1px solid #ddd;
  display: flex; align-items: flex-end; justify-content: center; color: #fff; font: bold 12px/16px "Liberation Sans", sans-serif;
}
.ime {
  position: absolute; left: 868px; top: 37px; width: 205px; height: 23px; z-index: 5;
  background: #f3f6f9; border: 1px solid #b9cfe0; display: flex; align-items: center; gap: 7px; padding-left: 29px;
}
.ime-s { position: absolute; left: -3px; top: -3px; width: 28px; height: 28px; transform: rotate(-10deg); }
.ime-zh { color: #1878d0; font-size: 15px; width: 16px; }
.ime-p { color: #1878d0; font: bold 15px/14px "Liberation Sans", sans-serif; width: 12px; margin-right: 5px; }
.ime .tight { margin-left: -4px; }

/* title */
.title { height: 23px; flex: none; background: #fff; display: flex; align-items: center; padding-left: 7px; color: #777; font-size: 13px; }
.app { width: 15px; height: 15px; }
.title-text { margin-left: 1px; white-space: nowrap; }
.winbtns { margin-left: auto; display: flex; align-items: center; }
.w-min { width: 11px; height: 1px; background: #999; margin-right: 34px; }
.w-max { width: 10px; height: 10px; border: 1px solid #999; margin-right: 36px; }
.w-close { width: 12px; margin-right: 18px; color: #888; font: 13px/13px "DejaVu Sans", sans-serif; }

/* menu */
.menu { height: 29px; flex: none; background: #f5f5f5; display: flex; align-items: center; padding-left: 7px; gap: 10.500px; white-space: nowrap; }
.notice { width: 187px; height: 28px; margin-left: -9px; align-self: flex-end; background: #fbfbfb; color: #0c7c8e; border-radius: 4px 4px 0 0; padding: 6px 0 0 28px; }
.acct { display: flex; align-items: center; gap: 4px; height: 28px; align-self: flex-end; background: #fbfbfb; padding: 0 8px 0 4px; margin-left: -9px; border-radius: 4px 4px 0 0; width: 226px; }
.phone { letter-spacing: .3px; }
.acct em { margin-left: 4px; }
.acct .tri { margin-left: 3px; }
.bell { width: 16px; height: 20px; margin-left: 7px; }
.menu .more { position: absolute; right: 2px; top: 30px; }

/* toolbar 1 */
.tb1 { height: 30px; flex: none; display: flex; background: #fff; padding: 2px 0; }
.tb1-a, .tb1-b, .tb1-c { display: flex; align-items: center; height: 26px; background: linear-gradient(#f9f9f9, #efefef); }
.tb1-a { width: 150px; padding-left: 5px; gap: 7px; }
.tb1-a .sep { margin-left: 1px; }
.tb1-a .more { margin-left: 7px; }
.tb1-b { width: 551px; padding-left: 4px; gap: 8px; margin-left: 2px; }
.tb1-b .off { margin-left: -2px; }
.tb1-c { flex: 1; gap: 6px; padding-left: 2px; margin-left: 0; padding-right: 3px; }
.view2d { width: 62px; height: 23px; border: 1px solid #777; display: flex; align-items: center; gap: 4px; padding-left: 4px; margin-right: -2px; }
.view2d .tri { margin-left: 3px; }
.sq { width: 14px; height: 13px; background: #e2e2e2; border: 1px solid #ccc; }

/* main */
.main { flex: 1; display: flex; min-height: 0; position: relative; background: #fff; }
.nav { width: 166px; flex: none; display: flex; flex-direction: column; padding: 2px 0 3px; }
.nav-head { height: 14px; margin-bottom: 3px; display: flex; align-items: center; border: 1px solid #aaa; border-left: 0; line-height: 12px; background: #f0f0f0; width: 165px; font-size: 12.500px; }
.nav-btn { margin-left: auto; margin-right: 12px; font: 9px/12px "DejaVu Sans", sans-serif; }
.nav-x { margin-right: 4px; color: #444; font: 10px/12px "DejaVu Sans", sans-serif; }
.navbtn { height: 22px; flex: none; margin-left: 1px; width: 164px; text-align: center; line-height: 20px; background: #f0f0f0; border: 1px solid #bbb; border-bottom-color: #999; }
.navbtn.cur { border-bottom: 2px solid #8a8a8a; }
.nav-tools { height: 27px; flex: none; margin: 1px 0 0 2px; width: 162px; background: linear-gradient(#fbfbfb, #ececec); display: flex; gap: 6px; padding: 5px 0 0 5px; }
.pm { width: 17px; height: 16px; display: block; }
.navtree { flex: 1; margin: 0 0 1px 2px; width: 162px; border: 1px solid #9a9a9a; border-bottom-width: 2px; background: #fff; }
.nr { height: 16px; display: flex; align-items: center; white-space: nowrap; padding-left: 9px; }
.fi { width: 16px; height: 14px; flex: none; margin: 0 5px 0 5px; }
.chev { width: 9px; height: 9px; flex: none; position: relative; }
.chev::before { content: ""; position: absolute; left: 0; top: 1px; width: 6px; height: 6px; border-right: 2px solid #aaa; border-top: 2px solid #aaa; transform: rotate(45deg); }
.chev.open::before { border-color: #555; transform: rotate(135deg); left: 1px; top: -1px; }
.nr.kid { padding-left: 30px; gap: 5px; }
.nr.kid::before { content: ""; width: 12px; height: 16px; flex: none; margin-right: -5px;
  background: repeating-linear-gradient(#888 0 1px, transparent 1px 2px) 0 0/1px 100% no-repeat, repeating-linear-gradient(90deg, #888 0 1px, transparent 1px 2px) 0 8px/100% 1px no-repeat; }
.selrow { display: flex; align-items: center; gap: 5px; background: #d3d3d3; height: 16px; margin-left: -3px; padding-left: 3px; width: 89px; }
.nr .selrow + .ic { margin-left: -4px; width: 15px; }
.ne { background: #ffd800; font: bold 9px/10px "Liberation Sans", sans-serif; align-self: flex-start; margin: 0 0 0 -4px; width: 15px; overflow: hidden; }

/* work */
.work { flex: 1; min-width: 0; display: flex; flex-direction: column; padding-left: 6px; }
.tb2 { height: 28px; flex: none; margin-top: 2px; background: linear-gradient(#fafafa, #eeeeee); display: flex; align-items: center; gap: 6px; padding-left: 3px; white-space: nowrap; }
.tb2 .it { gap: 4px; }
.tb2 .sep { margin: 0 -1px; }
.tb2 .find { margin-left: 4px; }
.floor { width: 62px; height: 24px; background: #fff; display: flex; align-items: center; justify-content: space-between; padding-right: 2px; margin-left: -1px; }
.tb2 .mv { gap: 7px; margin: 0 3px; }
.mv .ic { width: 12px; height: 14px; }
.panes { flex: 1; display: flex; min-height: 0; }
.complist { width: 184px; flex: none; display: flex; flex-direction: column; }
.searchrow { height: 31px; flex: none; display: flex; align-items: flex-start; gap: 6px; padding-top: 5px; }
.searchbox { width: 157px; height: 25px; border: 1px solid #aaa; background: #fff; color: #888; padding: 3px 0 0 3px; font-size: 12.500px; }
.searchi { width: 17px; height: 17px; margin-top: 4px; }
.comptree { flex: 1; display: flex; border: 2px solid #9a9a9a; border-top-width: 1px; margin-bottom: 3px; min-height: 0; overflow: hidden; }
.ctree { flex: 1; overflow: hidden; background: #fff; }
.croot { height: 16px; display: flex; align-items: center; gap: 5px; padding-left: 5px; margin-top: 1px; }
.croot .ic { width: 14px; height: 14px; margin: 0 0 0 3px; }
.cr { height: 16px; display: flex; padding-left: 29px; }
.cr::before { content: ""; width: 9px; height: 16px; flex: none;
  background: repeating-linear-gradient(#888 0 1px, transparent 1px 2px) 0 0/1px 100% no-repeat, repeating-linear-gradient(90deg, #888 0 1px, transparent 1px 2px) 0 8px/100% 1px no-repeat; }
.lb { width: 69px; padding-left: 4px; display: flex; align-items: center; gap: 8px; font: 11px/16px "Liberation Mono", monospace; letter-spacing: -.6px; }
.lb.sel { background: #2f65c0; }
.gear { width: 11px; height: 11px; flex: none; border-radius: 50%; border: 2px dotted #222; background: radial-gradient(#ff0 0 1px, #222 1px 2px, #ff0 2px); }
.scroll { width: 16px; flex: none; background: #f0f0f0; display: flex; flex-direction: column; align-items: center; }
.sc-thumb { width: 16px; height: 64px; background: #cdcdcd; margin-top: 4px; }
.sc-up, .sc-down { width: 7px; height: 7px; border-left: 2px solid #555; border-top: 2px solid #555; transform: rotate(45deg); margin-top: 7px; }
.sc-down { transform: rotate(225deg); margin-top: auto; margin-bottom: 7px; }

/* property pane */
.props { flex: 1; min-width: 0; margin-left: 4px; display: flex; flex-direction: column; padding-bottom: 5px; }
.tabs { height: 20px; flex: none; margin-top: 1px; border-bottom: 1px solid #bbb; background: #fff; }
.tab { display: inline-block; width: 60px; height: 20px; border: 1px solid #ddd; border-bottom: 0; background: #fff; text-align: center; line-height: 18px; }
.sheet { flex: 1; border: 1px solid #ccc; border-width: 0 1px 1px 2px; padding: 6px 0 0 1px; background: #fff; }
.prow { height: 19px; display: flex; border-bottom: 1px solid #c4c4c4; width: 300px; }
.prow.head { height: 22px; background: linear-gradient(#fbfbfb, #eee); }
.prow .n { width: 21px; flex: none; background: #f3f3f3; border-right: 1px solid #c4c4c4; text-align: center; line-height: 20px; }
.prow .v { flex: 1; padding: 1px 0 0 20px; line-height: 18px; display: flex; align-items: center; }
.prow.head .v { padding: 0 0 0 72px; line-height: 20px; font-size: 12.500px; }
.prow.cur .n { background: #fbd38a; color: #800; }
.prow.cur .v { background: #0078d7; color: #fff; }
.prow.blue .v { color: #00f; }
.prow.gray .v { color: #8a8a8a; }
.plus { width: 12px; height: 12px; margin: 0 5px 0 -17px; border: 1px solid #aaa; color: #222; font: 12px/10px "Liberation Sans", sans-serif; text-align: center; }

/* dialog window */
.dialog {
  position: absolute; left: 539px; top: 50px; width: 804px; height: 570px; z-index: 3;
  border: 1px solid #2c3a42; border-width: 1px 1px 2px 1px; background: linear-gradient(#97b2c8, #bdd3ea 32px); display: flex; flex-direction: column; padding: 0 7px 0 8px;
}
.dlg-title { height: 31px; flex: none; padding-top: 11px; line-height: 16px; color: #222; margin-left: -1px; }
.dlg-tabs { height: 21px; flex: none; display: flex; align-items: flex-end; background: #f0f0f0; padding-left: 3px; }
.dt { width: 32px; height: 19px; background: #ececec; border: 1px solid #ddd; text-align: center; line-height: 17px; }
.dt.on { width: 52px; height: 21px; background: #fff; border: 0; line-height: 19px; }
.dlg-panel { height: 485px; flex: none; background: #f2f2f2; border: 1px solid #ddd; padding: 3px 3px 0 4px; margin-right: -1px; display: flex; flex-direction: column; }
.dbar { display: flex; align-items: center; gap: 7px; white-space: nowrap; flex: none; }
.dbar .sep { height: 20px; }
.r1 { height: 26px; width: 520px; background: #f8f8f8; padding-left: 6px; }
.r1 .it { gap: 4px; }
.r1 .tri { margin-left: 3px; }
.combo { display: flex; height: 22px; width: 78px; margin: 0 -4px 0 -5px; }
.combo-v { width: 66px; background: #fff; font: 13px/20px "Liberation Sans", sans-serif; padding-left: 1px; letter-spacing: -.1px; }
.combo-b { width: 12px; background: #eaeaea; display: flex; align-items: center; justify-content: center; }
.combo-b .tri { margin: 0; }
.tbtn { display: inline-flex; align-items: center; gap: 3px; height: 24px; padding: 0 4px; border: 1px solid transparent; }
.tbtn.sel { border-color: #0078d7; background: #e5f1fb; }
.r1 .tbtn { width: 52px; padding-left: 5px; margin-left: -4px; }
.ref { width: 84px; }
.r1 .ref + .tri { margin: 0 0 0 3px; }
.r2 { height: 27px; margin-top: 1px; width: 350px; background: #f8f8f8; padding-left: 6px; }
.r2 .it { gap: 3px; }
.rtype { margin: 0 -7px 0 -5px; letter-spacing: .1px; }
.plainb { margin-left: -2px; }
.r2 .tbtn { height: 24px; }
.r2 .endb { gap: 3px; width: 74px; margin-left: -2px; padding: 0 2px; }
.canvas { height: 395px; flex: none; border: 2px solid #f00; background: #14181f; position: relative; margin-top: 1px; width: 780px; }
.cad { display: block; width: 776px; height: 391px; }
.cad path { fill: none; shape-rendering: crispEdges; }
.dg path { stroke: #3b4048; }
.dk path { stroke: #000; stroke-dasharray: 5 11; }
.tk { stroke: #3b4048; }
.diag { stroke: #7d7f82; stroke-dasharray: 6 3; }
.dim { font: 12px "Liberation Sans", sans-serif; fill: #30343b; }
.gl { stroke: #76b868; }
.bl { stroke: #0a4ee0; stroke-width: 2; }
.wt3 { stroke: #eee; stroke-width: 3; }
.wt2 { stroke: #e6e6e6; stroke-width: 2; }
.gy { stroke: #9c9fa3; }
.bb { fill: #0a70c8; }
.yb { fill: #fdd92a; }
.rb { fill: #c5161c; }
.wd { stroke: #d9e6f0; stroke-dasharray: 4 3; }
.cad .dm { fill: #14181f; stroke: #f0d020; stroke-width: 1.300; }
.wx { stroke: #fff; }
.cline { stroke: #f3f3e4; }
.t200 { font: 14px "Liberation Sans", sans-serif; fill: #f2f2f2; }
.t35 { font: 11px "Liberation Sans", sans-serif; fill: #2fe02f; }
.g3 { stroke: #2fe02f; }
.labbox { fill: #15155a; stroke: #6a6a6a; }
.labt { font: 12px "Liberation Sans", sans-serif; fill: #c6c6ea; }
.angle { position: absolute; left: 287px; top: 201px; width: 60px; height: 19px; background: #fff; border: 1px solid #777; padding: 1px 0 0 1px; font: 12.500px/15px "Liberation Sans", sans-serif; }
.angle span { display: inline-block; background: #0078d7; color: #fff; height: 15px; padding-right: 1px; }
.r3 { height: 28px; width: 233px; gap: 3px; background: #f8f8f8; margin: 0; padding-left: 0; }
.r3 .tbtn { gap: 4px; height: 24px; padding: 0 2px; }
.r3 .dynb { margin: 0 2px 0 -2px; }
.r3 .midb { margin-left: -2px; }
.dlg-status { height: 21px; flex: none; display: flex; gap: 3px; margin: 4px -1px 0 0; }
.coord { width: 96px; background: #f6f6f6; border: 1px solid #ddd; padding-left: 4px; font: 11px/19px "Liberation Sans", sans-serif; }
.hint { flex: 1; background: #f8f8f8; border: 1px solid #ddd; line-height: 19px; position: relative; }
.hint::after { content: ""; position: absolute; right: 3px; bottom: 2px; width: 9px; height: 9px; background: repeating-linear-gradient(135deg, #aaa 0 2px, transparent 2px 4px); }
.redbox { position: absolute; border: 7px solid #f00; z-index: 2; }
.rb1 { left: 156px; top: 177px; width: 67px; height: 46px; border-width: 6px; }
.rb2 { left: 129px; top: 254px; width: 110px; height: 51px; border-width: 6px; }
.rb3 { left: 240px; top: 62px; width: 108px; height: 52px; }

/* status */
.status { height: 21px; flex: none; display: flex; background: #fff; gap: 2px; padding: 1px 0; white-space: nowrap; }
.status span { background: #f6f6f6; border: 1px solid #e4e4e4; line-height: 17px; }
.s0 { width: 148px; }
.s1 { width: 78px; }
.s2 { width: 98px; }
.s3 { width: 48px; }
.s4 { width: 916px; }
.s5 { flex: 1; }

/* taskbar */
.taskbar { height: 40px; flex: none; background: #040b0f; display: flex; align-items: stretch; color: #d8d8d8; white-space: nowrap; }
.start { width: 48px; background: #000; display: flex; align-items: center; justify-content: center; }
.tsearch { width: 344px; background: #333; display: flex; align-items: center; padding-left: 10px; color: #999; font-size: 12.500px; }
.tsearch .ic { margin-left: auto; margin-right: 13px; }
.ring { width: 21px; height: 21px; border-radius: 50%; border: 3px solid #ddd; margin-right: 5px; }
.tsearch-t { width: 170px; }
.task { display: flex; align-items: center; justify-content: center; border-bottom: 3px solid transparent; padding-top: 3px; }
.w44 { width: 44px; } .w45 { width: 45px; } .w46 { width: 46px; } .w48 { width: 48px; } .w52 { width: 52px; }
.ti { width: 24px; height: 24px; display: block; }
.run { border-bottom-color: #7fb8e8; background-clip: padding-box; }
.act { background: #2f3a40; }
.tlink { width: 36px; margin-left: 12px; line-height: 40px; }
.tcpu { width: 68px; margin-left: -2px; display: flex; flex-direction: column; align-items: center; line-height: 20px; }
.tray { display: flex; align-items: center; gap: 4px; margin-left: 8px; width: 215px; }
.caret { width: 9px; height: 9px; border-left: 1.500px solid #ddd; border-top: 1.500px solid #ddd; transform: rotate(45deg); margin: 4px 6px 0 5px; }
.tr { width: 20px; height: 20px; display: block; flex: none; }
.tr.k { width: 24px; margin-left: 2px; }
.tzh { margin: 0 8px 0 5px; color: #fff; font-size: 13px; }
.clock { width: 69px; margin-left: -6px; display: flex; flex-direction: column; align-items: center; line-height: 20px; }
.notif { flex: 1; background: #000; display: flex; align-items: center; justify-content: center; padding-right: 10px; }
.tr.big { width: 22px; height: 22px; }
```
